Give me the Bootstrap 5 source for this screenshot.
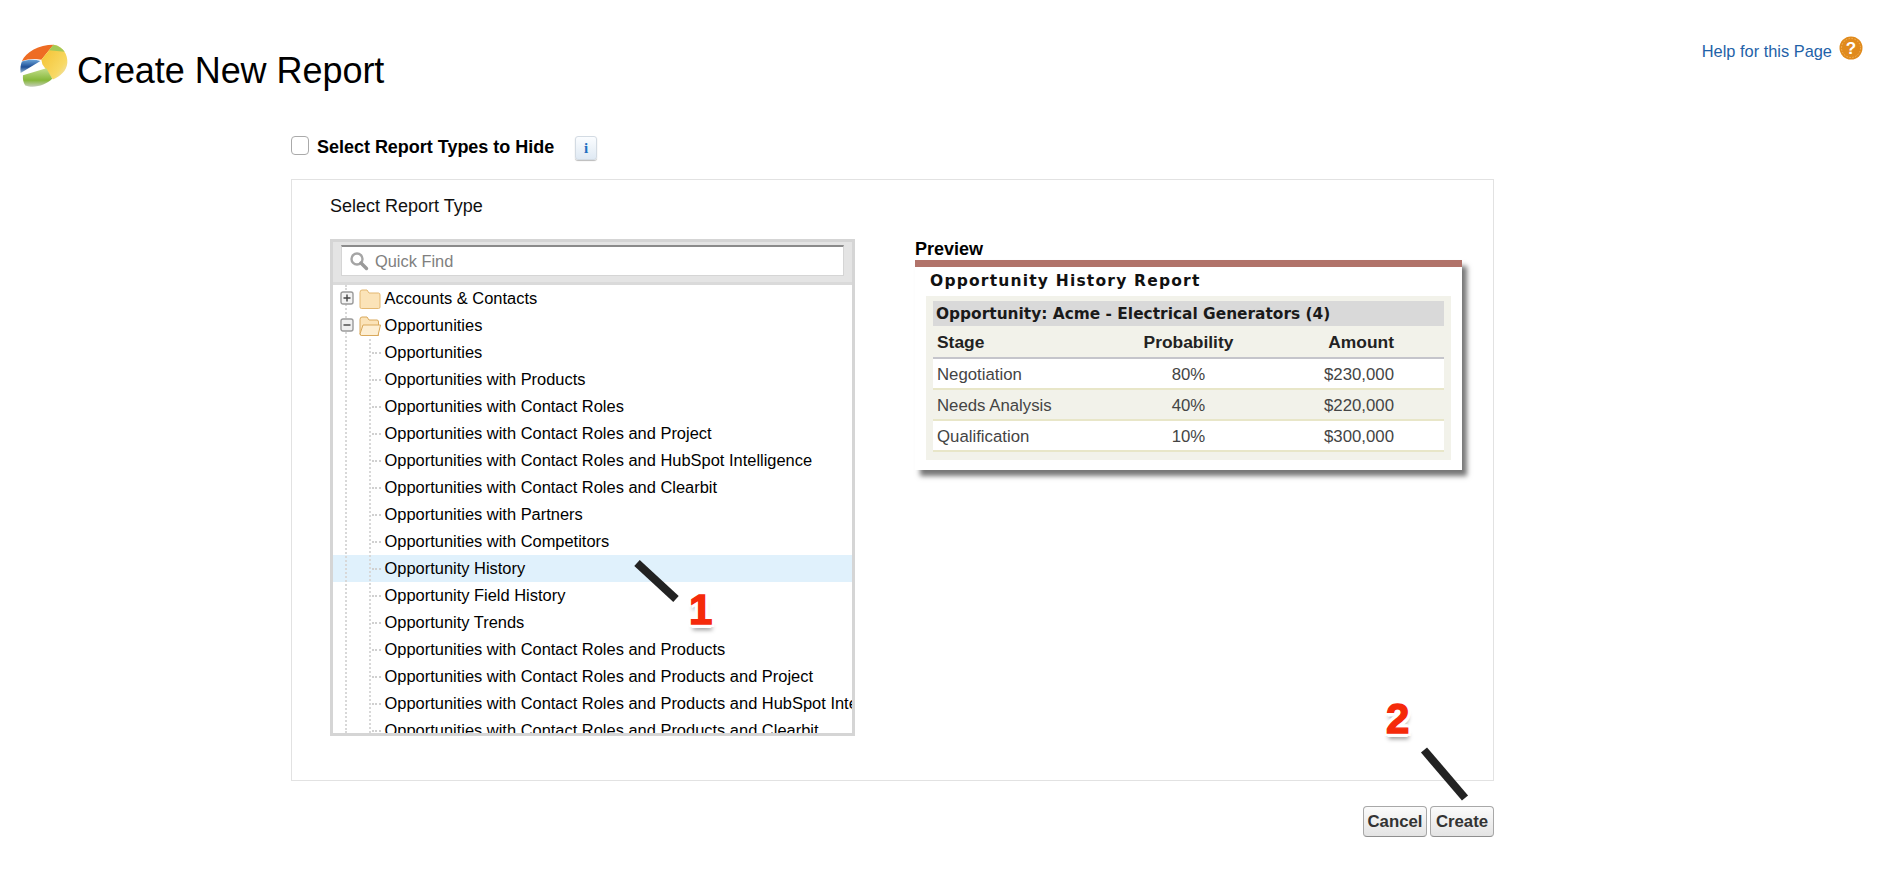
<!DOCTYPE html>
<html lang="en">
<head>
<meta charset="utf-8">
<title>Create New Report</title>
<link href="https://cdn.jsdelivr.net/npm/bootstrap@5.3.0/dist/css/bootstrap.min.css" rel="stylesheet">
<style>
html,body{background:#fff;font-family:"Liberation Sans",Arial,sans-serif;color:#000;height:882px;overflow:hidden}
.page-head{padding:43px 22px 0 20px;height:127px}
.logo-mark{margin:-1px 1px 0 0;flex:none}
.page-title{font-size:36px;font-weight:400;margin:0;line-height:56px;letter-spacing:-.05px}
.help-link{font-size:16.4px;color:#1f62a8;text-decoration:none;margin-top:6px}
.help-wrap{margin-top:-10px;gap:7px}
.hide-row{margin-left:291px;height:52px;padding-top:9px}
.hide-row .form-check-input{width:18px;height:19px;margin:0 8px 0 0;border-color:#aaa;border-radius:4px;flex:none}
.hide-label{font-size:18px;line-height:22px;font-weight:700;margin:0;letter-spacing:-.02px}
.info-btn{width:22px;height:24px;padding:0;margin-left:21px;border:1px solid #d3dbe3;border-radius:3px;background:linear-gradient(#fbfdff,#dfe9f3);color:#1f6fc0;font:700 15px/22px "Liberation Serif",serif;box-shadow:0 1px 1px #bbb}
.main-wrap{margin-left:291px;width:1203px}
.report-panel{border:1px solid #e2e2e2;height:602px;padding:14px 38px 0}
.panel-title{font-size:18px;line-height:24px;height:45px;color:#111}
.tree-box{width:525px;height:497px;border:3px solid #d5d5d5;background:#fff;overflow:hidden;flex:none}
.tree-head{height:43px;background:#e4e4e4;border-bottom:3px solid #dadada;padding:3px 8px 0}
.find-wrap{height:31px;background:#fff;border:1px solid #d5d5d5;border-top:2px solid #8b8b8b;padding:0 0 0 7px;gap:6px}
.find-input{border:0;padding:0;height:100%;font-size:16.4px;color:#6f6f6f;background:transparent;box-shadow:none;border-radius:0}
.find-input::placeholder{color:#808080;opacity:1}
.tree-list{height:448px;overflow:hidden;position:relative;flex-wrap:nowrap}
.tree-list::before{content:"";position:absolute;left:12px;top:0;bottom:0;border-left:2px dotted #d8d8d8;z-index:1}
.tree-list::after{content:"";position:absolute;left:36px;top:54px;bottom:0;border-left:2px dotted #d8d8d8;z-index:1}
.tree-row{flex:none;height:27px;line-height:27px;font-size:16.45px;white-space:nowrap;padding:0 0 0 51.5px;border:0;border-radius:0;color:#000;background:transparent;position:relative;overflow:hidden}
.tree-row.leaf::before{content:"";position:absolute;left:39px;top:13px;width:9px;border-top:2px dotted #d0d0d0}
.tree-row.picked{background:#e0f1fc}
.tree-folder{padding-left:7px;z-index:2;gap:3.8px;display:flex;align-items:center}
.tree-box-icon{flex:none}
.preview-col{margin-left:60px;width:555px}
.preview-title{font-size:18px;font-weight:700;line-height:20px;margin-top:0;height:21px}
.preview-card{width:547px;height:210px;background:#fff;border-top:7px solid #b1736a;box-shadow:5px 6px 5px #777;padding:0 11px}
.preview-name{font:700 15.5px/28px "DejaVu Sans",sans-serif;letter-spacing:1.2px;padding-left:4px;color:#111;height:29px;white-space:nowrap}
.preview-inner{background:#f2f2ea;padding:5px 7px 10px;height:164px}
.preview-table{margin:0;font-size:16.8px;color:#444;--bs-table-bg:transparent;--bs-table-color:#444;table-layout:fixed}
.preview-table th,.preview-table td{padding:2px 4px 0;border:0;vertical-align:middle;box-shadow:none}
.group-row td{background:#d9d9d9;height:25px;padding:0 4px 0 3px;font:700 15.4px/24px "DejaVu Sans",sans-serif;color:#1a1a1a;white-space:nowrap}
.head-row th{height:32px;border-bottom:2px solid #c5c5cb;color:#222;font-weight:700;font-size:17.4px;background:transparent}
.data-row td{height:31px;border-bottom:2px solid #e8e6c8;background:#fff}
.data-row.alt td{background:#f2f2ea}
.preview-table .amount-cell{padding-right:50px}
.action-row{padding-top:25px;gap:3px}
.sf-btn{width:64px;height:31px;padding:0;font-size:16.8px;font-weight:700;color:#333;background:linear-gradient(#fbfbfb,#e4e4e4);border:1px solid #a8a8a8;border-bottom-color:#8f8f8f;border-radius:4px;line-height:28px}
.callout{position:absolute;font:900 42px/1 "Liberation Sans",sans-serif;color:#f52a0a;-webkit-text-stroke:1.4px #f52a0a;text-shadow:-4px 0 0 #fff,4px 0 0 #fff,0 -4px 0 #fff,0 4px 0 #fff,-3px -3px 0 #fff,3px -3px 0 #fff,-3px 3px 0 #fff,3px 3px 0 #fff,1px 6px 4px #999;z-index:5}
.callout-one{left:689px;top:589px}
.callout-two{left:1386px;top:698px}
.arrow-layer{position:absolute;left:0;top:0;z-index:4;pointer-events:none}
</style>
</head>
<body class="position-relative">
<header class="page-head d-flex justify-content-between align-items-start">
  <div class="d-flex align-items-start gap-2">
    <svg class="logo-mark" width="48" height="48" viewBox="28 26 146 138" aria-hidden="true">
      <defs><linearGradient id="bl" x1="0" y1="0" x2="0" y2="1"><stop offset="0" stop-color="#6aa3d8"/><stop offset=".55" stop-color="#1f4f96"/><stop offset="1" stop-color="#9fbdd6"/></linearGradient>
      <linearGradient id="gr" x1="0" y1="0" x2="0" y2="1"><stop offset="0" stop-color="#c4de8c"/><stop offset=".65" stop-color="#86b83a"/><stop offset="1" stop-color="#c6cdbb"/></linearGradient>
      <linearGradient id="ye" x1="0" y1="0" x2="1" y2="1"><stop offset="0" stop-color="#f4bf2c"/><stop offset=".7" stop-color="#f8d964"/><stop offset="1" stop-color="#e9e4cf"/></linearGradient></defs>
      <path d="M34 80C46 52 85 30 130 30L93 76C72 72 52 74 34 80Z" fill="#ee6c23"/>
      <path d="M130 30C158 34 174 60 172 85C170 110 150 127 128 136L96 90L93 76Z" fill="url(#ye)"/>
      <path d="M130 30C146 33 157 41 164 52L116 47Z" fill="#a4c957"/>
      <path d="M30 116C28 100 30 90 34 81C52 75 73 74 90 80Z" fill="url(#bl)"/>
      <path d="M37 123L108 102L126 134C106 154 70 164 44 154C38 146 36 135 37 123Z" fill="url(#gr)"/>
    </svg>
    <h1 class="page-title">Create New Report</h1>
  </div>
  <div class="help-wrap d-flex align-items-center">
    <a class="help-link" href="#">Help for this Page</a>
    <svg width="24" height="24" viewBox="0 0 24 24" aria-hidden="true"><circle cx="12" cy="12" r="11.500" fill="#e08a1c"/><circle cx="12" cy="12" r="9.500" fill="none" stroke="#f2b45c" stroke-dasharray="1.500 1.500"/><text x="12" y="18" text-anchor="middle" font-family="Liberation Sans" font-weight="700" font-size="17" fill="#fff">?</text></svg>
  </div>
</header>

<section class="hide-row d-flex align-items-start">
  <input class="form-check-input" type="checkbox" id="hideTypes">
  <label class="hide-label" for="hideTypes">Select Report Types to Hide</label>
  <button class="info-btn" type="button">i</button>
</section>

<main class="main-wrap">
  <div class="report-panel">
    <div class="panel-title">Select Report Type</div>
    <div class="d-flex align-items-start">
      <div class="tree-box">
        <div class="tree-head">
          <div class="find-wrap d-flex align-items-center">
            <svg width="20" height="20" viewBox="0 0 20 20" class="flex-shrink-0" aria-hidden="true"><circle cx="8" cy="8" r="5.500" fill="#fff" stroke="#a5a5a5" stroke-width="2.400"/><path d="M12 12l5.500 5.500" stroke="#9a9a9a" stroke-width="3.400" stroke-linecap="round"/></svg>
            <input class="form-control find-input" type="text" placeholder="Quick Find" aria-label="Quick Find">
          </div>
        </div>
        <div class="list-group list-group-flush tree-list">
          <div class="list-group-item tree-row tree-folder">
            <svg width="15" height="15" viewBox="0 0 15 15" class="tree-box-icon" aria-hidden="true"><rect x="1" y="1" width="12" height="12" rx="2" fill="#f3f3f3" stroke="#9a9a9a" stroke-width="1.400"/><path d="M3.500 7h7M7 3.500v7" stroke="#444" stroke-width="1.400"/></svg>
            <svg width="22" height="22" viewBox="0 0 22 22" class="flex-shrink-0" aria-hidden="true"><path d="M1 4.500Q1 2 3 2H8L10 5H19.500Q21 5 21 7V19Q21 20.500 19.500 20.500H2.500Q1 20.500 1 19Z" fill="#fbe3b8" stroke="#e3b771"/></svg>
            <span>Accounts &amp; Contacts</span>
          </div>
          <div class="list-group-item tree-row tree-folder">
            <svg width="15" height="15" viewBox="0 0 15 15" class="tree-box-icon" aria-hidden="true"><rect x="1" y="1" width="12" height="12" rx="2" fill="#f0f0f0" stroke="#9a9a9a" stroke-width="1.400"/><path d="M3.500 7h7" stroke="#444" stroke-width="1.400"/></svg>
            <svg width="22" height="22" viewBox="0 0 22 22" class="flex-shrink-0" aria-hidden="true"><path d="M1 4.500Q1 2 3 2H8L10 5H18Q19.500 5 19.500 7V20.500H2.500Q1 20.500 1 19Z" fill="#fbe3b8" stroke="#d9a95c"/><path d="M1 19L4 10H21.500L19 20.500H2.500Z" fill="#fdeed2" stroke="#d9a95c"/></svg>
            <span>Opportunities</span>
          </div>
          <div class="list-group-item tree-row leaf">Opportunities</div>
          <div class="list-group-item tree-row leaf">Opportunities with Products</div>
          <div class="list-group-item tree-row leaf">Opportunities with Contact Roles</div>
          <div class="list-group-item tree-row leaf">Opportunities with Contact Roles and Project</div>
          <div class="list-group-item tree-row leaf">Opportunities with Contact Roles and HubSpot Intelligence</div>
          <div class="list-group-item tree-row leaf">Opportunities with Contact Roles and Clearbit</div>
          <div class="list-group-item tree-row leaf">Opportunities with Partners</div>
          <div class="list-group-item tree-row leaf">Opportunities with Competitors</div>
          <div class="list-group-item tree-row leaf picked">Opportunity History</div>
          <div class="list-group-item tree-row leaf">Opportunity Field History</div>
          <div class="list-group-item tree-row leaf">Opportunity Trends</div>
          <div class="list-group-item tree-row leaf">Opportunities with Contact Roles and Products</div>
          <div class="list-group-item tree-row leaf">Opportunities with Contact Roles and Products and Project</div>
          <div class="list-group-item tree-row leaf">Opportunities with Contact Roles and Products and HubSpot Intelligence</div>
          <div class="list-group-item tree-row leaf">Opportunities with Contact Roles and Products and Clearbit</div>
        </div>
      </div>
      <div class="preview-col">
        <div class="preview-title">Preview</div>
        <div class="preview-card">
          <div class="preview-name">Opportunity History Report</div>
          <div class="preview-inner">
            <table class="table preview-table">
              <colgroup><col style="width:30%"><col style="width:40%"><col style="width:30%"></colgroup>
              <tbody>
                <tr class="group-row"><td colspan="3">Opportunity: Acme - Electrical Generators (4)</td></tr>
                <tr class="head-row"><th>Stage</th><th class="text-center">Probability</th><th class="text-end amount-cell">Amount</th></tr>
                <tr class="data-row"><td>Negotiation</td><td class="text-center">80%</td><td class="text-end amount-cell">$230,000</td></tr>
                <tr class="data-row alt"><td>Needs Analysis</td><td class="text-center">40%</td><td class="text-end amount-cell">$220,000</td></tr>
                <tr class="data-row"><td>Qualification</td><td class="text-center">10%</td><td class="text-end amount-cell">$300,000</td></tr>
              </tbody>
            </table>
          </div>
        </div>
      </div>
    </div>
  </div>
  <div class="action-row d-flex justify-content-end">
    <button class="btn sf-btn" type="button">Cancel</button>
    <button class="btn sf-btn" type="button">Create</button>
  </div>
</main>

<svg class="arrow-layer" width="1885" height="882" aria-hidden="true">
  <path d="M637 563L676 599" stroke="#222" stroke-width="8"/>
  <path d="M1424 750L1465 798" stroke="#222" stroke-width="8"/>
</svg>
<span class="callout callout-one">1</span>
<span class="callout callout-two">2</span>
<script src="https://cdn.jsdelivr.net/npm/bootstrap@5.3.0/dist/js/bootstrap.bundle.min.js"></script>
</body>
</html>
